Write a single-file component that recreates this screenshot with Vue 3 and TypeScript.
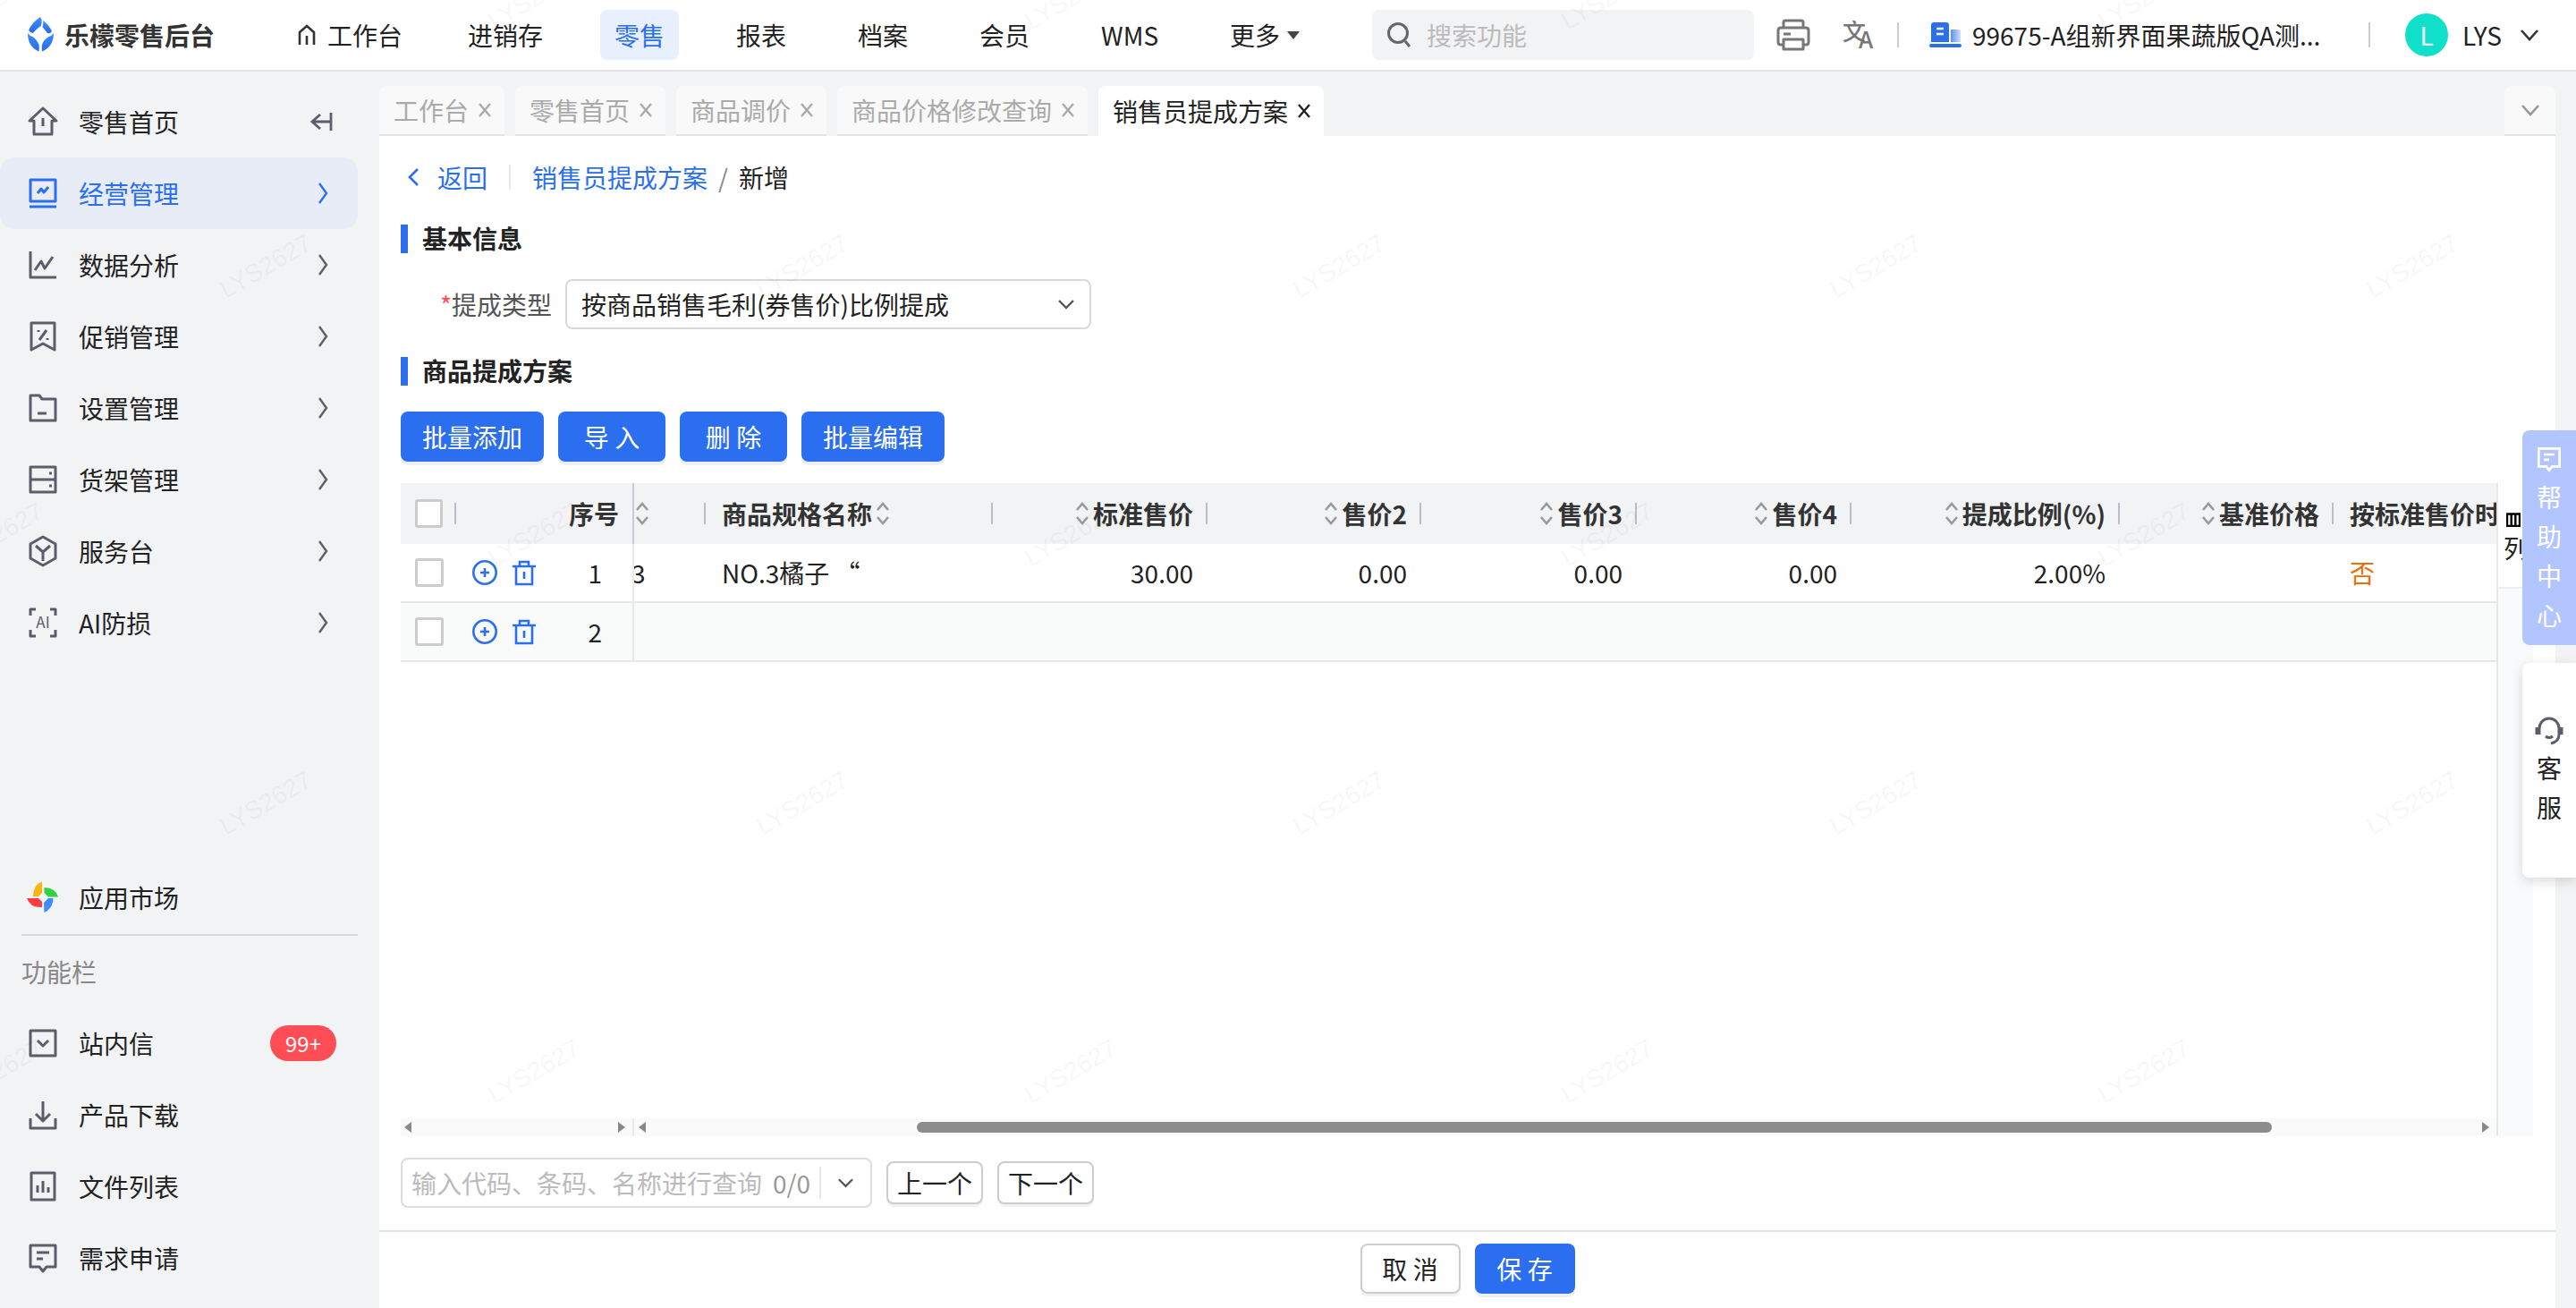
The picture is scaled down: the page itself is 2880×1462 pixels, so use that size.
<script setup lang="ts">
import { computed } from "vue";

interface SideItem {
    label: string;
    icon: string;
    arrow?: boolean;
    active?: boolean;
    ai?: boolean;
}

const icons = {
    home: "M18 3L33 17H28V32H8V17H3ZM18 14V23",
    monitor: "M4 3H32V27H4ZM3 33H33M12 18L16 13L19 17L24 11",
    data: "M4 3V32H33M9 24L16 14L20 22L29 9",
    promo: "M5 3H31V33L18 26L5 33ZM22 11L14 22M13 11V13M23 20V22",
    folder: "M4 4H14L17 8H32V32H4ZM12 24H22",
    shelf: "M4 4H32V32H4ZM4 18H32M25 11H28M25 25H28",
    hex: "M18 2L32 10V26L18 34L4 26V10ZM10 12L18 19L26 12M18 19V29",
    corners: "M10 3H4V10M26 3H32V10M4 26V33H10M32 26V33H26",
    mail: "M4 4H32V32H4ZM12 15L18 21L24 15",
    download: "M18 3V24M10 17L18 25L26 17M4 22V33H32V22",
    files: "M5 3H31V33H5ZM12 25V17M18 25V12M24 25V19",
    request: "M4 4H32V28H22L18 33L14 28H4ZM11 12H25M11 19H18",
};

const mainMenu: SideItem[] = [
    { label: "经营管理", icon: icons.monitor, arrow: true, active: true },
    { label: "数据分析", icon: icons.data, arrow: true },
    { label: "促销管理", icon: icons.promo, arrow: true },
    { label: "设置管理", icon: icons.folder, arrow: true },
    { label: "货架管理", icon: icons.shelf, arrow: true },
    { label: "服务台", icon: icons.hex, arrow: true },
    { label: "AI防损", icon: icons.corners, arrow: true, ai: true },
];

const toolMenu: SideItem[] = [
    { label: "产品下载", icon: icons.download },
    { label: "文件列表", icon: icons.files },
    { label: "需求申请", icon: icons.request },
];

const navItems = ["进销存", "零售", "报表", "档案", "会员", "WMS"];
const tabs = ["工作台", "零售首页", "商品调价", "商品价格修改查询"];

interface Column {
    title: string;
    width: number;
    align: "left" | "right";
    sort: boolean;
    value?: string;
}

const columns: Column[] = [
    { title: "", width: 80, align: "left", sort: true, value: "3" },
    { title: "商品规格名称", width: 321, align: "left", sort: true, value: "NO.3橘子 “" },
    { title: "标准售价", width: 240, align: "right", sort: true, value: "30.00" },
    { title: "售价2", width: 239, align: "right", sort: true, value: "0.00" },
    { title: "售价3", width: 241, align: "right", sort: true, value: "0.00" },
    { title: "售价4", width: 240, align: "right", sort: true, value: "0.00" },
    { title: "提成比例(%)", width: 300, align: "right", sort: true, value: "2.00%" },
    { title: "基准价格", width: 239, align: "right", sort: true, value: "" },
    { title: "按标准售价时", width: 182, align: "left", sort: false, value: "否" },
];

const watermarks = computed(() => {
    const marks: { left: number; top: number }[] = [];
    for (let row = 0; row < 6; row++) {
        const top = row * 300 - 2;
        const start = row % 2 === 0 ? -3 : 297;
        for (let col = 0; col < 6; col++) {
            marks.push({ left: start + col * 600, top });
        }
    }
    return marks;
});
</script>

<template>
    <div class="app">
        <header class="topbar">
            <div class="logo">
                <svg width="29" height="40" viewBox="0 0 29 40">
                    <defs>
                        <linearGradient id="logoBlue" x1="0" y1="0" x2="0" y2="1">
                            <stop offset="0" stop-color="#3f8ff7" />
                            <stop offset="1" stop-color="#2468ee" />
                        </linearGradient>
                    </defs>
                    <g fill="url(#logoBlue)">
                        <path d="M1 15Q4 7 14 0Q17 5 14.500 10Q10 13 6 18Q3 18 1 15Z" />
                        <path d="M17 4Q24 9 27 16Q25 19 22 18Q19 14 16.500 11Q18 7 17 4Z" />
                        <path d="M0 18Q2 21 5.500 22Q10 25 12.500 31Q13 35 12.500 38.500Q0 33 0 18Z" />
                        <path d="M29 18Q27 21 23.500 22Q18 25 16 31Q15.500 35 16 38.500Q29 33 29 18Z" />
                    </g>
                </svg>
                <span>乐檬零售后台</span>
            </div>
            <nav class="nav">
                <a class="nav-item home">
                    <svg width="22" height="26" viewBox="0 0 22 26" fill="none" stroke="#333" stroke-width="2.600">
                        <path d="M3 24V10L11 3L19 10V24M11 14V24" />
                    </svg>
                    工作台
                </a>
                <a v-for="item in navItems" :key="item" class="nav-item" :class="{ current: item === '零售' }">{{ item }}</a>
                <a class="nav-item">更多<i class="caret"></i></a>
            </nav>
            <div class="search">
                <svg width="28" height="30" viewBox="0 0 28 30" fill="none" stroke="#666" stroke-width="3">
                    <circle cx="13" cy="13" r="10.500" />
                    <path d="M21 22L26 28" />
                </svg>
                <span>搜索功能</span>
            </div>
            <svg class="printer" width="38" height="36" viewBox="0 0 38 36" fill="none" stroke="#777" stroke-width="3" stroke-linejoin="round">
                <path d="M8 10V4Q8 2 10 2H28Q30 2 30 4V10M8 29H5Q2 29 2 26V13Q2 10 5 10H33Q36 10 36 13V26Q36 29 33 29H30M8 23H30V34H8ZM8 17H16" />
            </svg>
            <svg class="translate" width="38" height="32" viewBox="0 0 38 32">
                <text x="0" y="22" font-size="26" font-weight="500" fill="#777">文</text>
                <text x="18" y="31" font-size="26" font-weight="500" fill="#777">A</text>
            </svg>
            <i class="top-divider first"></i>
            <svg class="building" width="36" height="28" viewBox="0 0 36 28">
                <defs>
                    <linearGradient id="buildingSide" x1="0" y1="0" x2="1" y2="0">
                        <stop offset="0" stop-color="#5b8ff5" />
                        <stop offset="1" stop-color="#cfdffb" />
                    </linearGradient>
                </defs>
                <path d="M2 3Q2 0 5 0H19Q22 0 22 3V22H2Z" fill="#2b6ff0" />
                <path d="M24 8H33Q35 8 35 10V22H24Z" fill="url(#buildingSide)" />
                <rect x="0" y="24" width="36" height="4" rx="2" fill="#2b6ff0" />
                <path d="M8 7H16M8 13H16" stroke="#fff" stroke-width="2.500" />
            </svg>
            <span class="org">99675-A组新界面果蔬版QA测...</span>
            <i class="top-divider second"></i>
            <span class="avatar">L</span>
            <span class="user">LYS</span>
            <svg class="user-arrow" width="22" height="14" viewBox="0 0 22 14" fill="none" stroke="#333" stroke-width="2.600">
                <path d="M2 2L11 12L20 2" />
            </svg>
        </header>

        <div class="body">
            <aside class="sidebar">
                <div class="side-row">
                    <svg class="side-icon" width="36" height="36" viewBox="0 0 36 36"><path :d="icons.home" /></svg>
                    <span>零售首页</span>
                    <svg class="collapse" width="26" height="24" viewBox="0 0 26 24" fill="none" stroke="#5c5d6b" stroke-width="2.800">
                        <path d="M24 2V22M12 4L3 12L12 20M3 12H24" />
                    </svg>
                </div>
                <div v-for="item in mainMenu" :key="item.label" class="side-row" :class="{ active: item.active }">
                    <svg class="side-icon" width="36" height="36" viewBox="0 0 36 36">
                        <path :d="item.icon" />
                        <text v-if="item.ai" x="18" y="24" class="ai-text" text-anchor="middle">AI</text>
                    </svg>
                    <span>{{ item.label }}</span>
                    <svg class="side-arrow" width="14" height="28" viewBox="0 0 14 28" fill="none" stroke-width="2.400">
                        <path d="M3 3L11 14L3 25" />
                    </svg>
                </div>
                <div class="side-bottom">
                    <div class="side-row">
                        <svg width="36" height="36" viewBox="0 0 36 36">
                            <path d="M7 17Q7 4 17 0.500V13L13 17Z" fill="#fbb40f" />
                            <path d="M19.500 7Q32 7 35 17.500H24L19.500 13Z" fill="#2fd23f" />
                            <path d="M0 19H13L17 23V29Q4 30 0 19Z" fill="#ff3d3d" />
                            <path d="M19 24L24 19H29.500Q29.500 30 19.500 35Z" fill="#3b8dff" />
                        </svg>
                        <span>应用市场</span>
                    </div>
                    <div class="side-line"></div>
                    <div class="side-title">功能栏</div>
                    <div class="side-row">
                        <svg class="side-icon" width="36" height="36" viewBox="0 0 36 36"><path :d="icons.mail" /></svg>
                        <span>站内信</span>
                        <b class="badge">99+</b>
                    </div>
                    <div v-for="item in toolMenu" :key="item.label" class="side-row">
                        <svg class="side-icon" width="36" height="36" viewBox="0 0 36 36"><path :d="item.icon" /></svg>
                        <span>{{ item.label }}</span>
                    </div>
                </div>
            </aside>

            <main class="main">
                <div class="tabs">
                    <div v-for="tab in tabs" :key="tab" class="tab">
                        {{ tab }}
                        <svg class="tab-x" width="16" height="16" viewBox="0 0 16 16"><path d="M2 1L14 15M14 1L2 15" /></svg>
                    </div>
                    <div class="tab on">
                        销售员提成方案
                        <svg class="tab-x" width="16" height="16" viewBox="0 0 16 16"><path d="M2 1L14 15M14 1L2 15" /></svg>
                    </div>
                    <div class="tab-more">
                        <svg width="22" height="14" viewBox="0 0 22 14" fill="none" stroke="#999" stroke-width="2.600">
                            <path d="M2 2L11 12L20 2" />
                        </svg>
                    </div>
                </div>

                <section class="page">
                    <div class="crumbs">
                        <svg width="14" height="22" viewBox="0 0 14 22" fill="none" stroke="#2b6ff0" stroke-width="2.600">
                            <path d="M12 2L3 11L12 20" />
                        </svg>
                        <a class="back">返回</a>
                        <i class="crumb-line"></i>
                        <a>销售员提成方案</a>
                        <span class="slash">/</span>
                        <span class="crumb-now">新增</span>
                    </div>

                    <h3 class="section">基本信息</h3>
                    <div class="form-row">
                        <label><i>*</i>提成类型</label>
                        <div class="select">
                            <span>按商品销售毛利(券售价)比例提成</span>
                            <svg width="20" height="12" viewBox="0 0 20 12" fill="none" stroke="#555" stroke-width="2.400">
                                <path d="M2 2L10 10L18 2" />
                            </svg>
                        </div>
                    </div>

                    <h3 class="section">商品提成方案</h3>
                    <div class="toolbar">
                        <button class="btn wide">批量添加</button>
                        <button class="btn">导 入</button>
                        <button class="btn">删 除</button>
                        <button class="btn wide">批量编辑</button>
                    </div>

                    <div class="table-wrap">
                        <div class="table">
                            <div class="grid-area">
                                <div class="tr head">
                                    <div class="fixed">
                                        <div class="check-cell"><i class="check"></i><i class="head-line"></i></div>
                                        <div class="seq-head">序号</div>
                                    </div>
                                    <div
                                        v-for="col in columns"
                                        :key="col.title"
                                        class="th"
                                        :class="[col.align, { 'sort-only': !col.title }]"
                                        :style="{ width: col.width + 'px' }"
                                    >
                                        <svg v-if="col.sort" class="sort" width="16" height="30" viewBox="0 0 16 30" fill="none" stroke="#999" stroke-width="2.600">
                                            <path d="M2 11L8 4L14 11M2 19L8 26L14 19" />
                                        </svg>
                                        <span v-if="col.title">{{ col.title }}</span>
                                        <i v-if="col.sort" class="th-line"></i>
                                    </div>
                                </div>
                                <div v-for="n in 2" :key="n" class="tr body-row" :class="{ even: n === 2 }">
                                    <div class="fixed">
                                        <div class="check-cell"><i class="check"></i></div>
                                        <svg class="op" width="30" height="30" viewBox="0 0 30 30" fill="none" stroke="#2b6ff0" stroke-width="2.600">
                                            <circle cx="15" cy="15" r="12.700" />
                                            <path d="M15 10V20M10 15H20" />
                                        </svg>
                                        <svg class="op trash" width="28" height="30" viewBox="0 0 28 30" fill="none" stroke="#2b6ff0" stroke-width="2.600">
                                            <path d="M1 8H27M5 8V28H23V8M9 8V3H19V8M14 14V22" />
                                        </svg>
                                        <span class="seq">{{ n }}</span>
                                    </div>
                                    <template v-if="n === 1">
                                        <div
                                            v-for="col in columns"
                                            :key="col.title"
                                            class="td"
                                            :class="[col.align, { no: col.value === '否', clip: col.title === '' }]"
                                            :style="{ width: col.width + 'px' }"
                                        >
                                            {{ col.value }}
                                        </div>
                                    </template>
                                </div>
                            </div>
                            <div class="scroll-row">
                                <div class="scroll-left">
                                    <i class="tri l"></i>
                                    <i class="tri r"></i>
                                </div>
                                <div class="scroll-right">
                                    <i class="tri l"></i>
                                    <div class="track"><div class="thumb"></div></div>
                                    <i class="tri r"></i>
                                </div>
                            </div>
                        </div>
                        <div class="col-side">
                            <div class="col-top">
                                <svg width="16" height="16" viewBox="0 0 16 16" fill="none" stroke="#000" stroke-width="2.400">
                                    <path d="M1 1.500H15V15H1ZM5.700 2V15M10.300 2V15" />
                                </svg>
                                <span>列</span>
                            </div>
                        </div>
                    </div>

                    <div class="finder-row">
                        <div class="finder">
                            <span class="ph">输入代码、条码、名称进行查询</span>
                            <span class="count">0/0</span>
                            <i class="finder-line"></i>
                            <svg width="20" height="12" viewBox="0 0 20 12" fill="none" stroke="#555" stroke-width="2.400">
                                <path d="M2 2L10 10L18 2" />
                            </svg>
                        </div>
                        <button class="ghost small">上一个</button>
                        <button class="ghost small">下一个</button>
                    </div>

                    <footer class="footer">
                        <button class="ghost">取 消</button>
                        <button class="btn save">保 存</button>
                    </footer>
                </section>
            </main>
        </div>

        <div class="help">
            <svg width="30" height="30" viewBox="0 0 36 36" fill="none" stroke="#fff" stroke-width="3.200">
                <path :d="icons.request" />
            </svg>
            <span>帮</span><span>助</span><span>中</span><span>心</span>
        </div>
        <div class="service">
            <svg width="34" height="34" viewBox="0 0 34 34" fill="none" stroke="#5c5d6b" stroke-width="3">
                <path d="M6 22V15A11 11 0 0 1 28 15V22Q28 30 19 32M3 14V22M31 14V22M13 24Q17 27 21 24" />
            </svg>
            <span>客</span><span>服</span>
        </div>

        <div class="watermarks">
            <span
                v-for="(mark, i) in watermarks"
                :key="i"
                class="mark"
                :style="{ left: mark.left + 'px', top: mark.top + 'px' }"
            >LYS2627</span>
        </div>
    </div>
</template>

<style>
html,
body {
    margin: 0;
    background: #fff;
}
</style>

<style scoped>
.app {
    position: relative;
    width: 2880px;
    height: 1462px;
    overflow: hidden;
    display: flex;
    flex-direction: column;
    font-family: "Noto Sans CJK SC", "Noto Sans", sans-serif;
    font-size: 28px;
    line-height: 40px;
    color: #222;
    background: #fff;
}

/* top bar */
.topbar {
    height: 78px;
    flex: none;
    display: flex;
    align-items: center;
    border-bottom: 2px solid #e2e2e2;
    background: #fff;
}
.logo {
    display: flex;
    align-items: center;
    width: 300px;
    padding-left: 31px;
    box-sizing: border-box;
    flex: none;
    gap: 12px;
    font-weight: 700;
    color: #333;
}
.nav {
    display: flex;
    align-items: center;
    gap: 48px;
    width: 1218px;
    margin-left: 16px;
    flex: none;
}
.nav-item {
    height: 56px;
    padding: 0 16px;
    display: flex;
    align-items: center;
    gap: 14px;
    border-radius: 8px;
}
.nav-item.home {
    gap: 12px;
    margin-right: -7px;
}
.nav-item.current {
    background: #e8effd;
    color: #2b6ff0;
}
.caret {
    margin-left: -6px;
    border: 7px solid transparent;
    border-top: 9px solid #444;
    border-bottom: 0;
}
.search {
    width: 427px;
    height: 56px;
    flex: none;
    display: flex;
    align-items: center;
    gap: 17px;
    padding-left: 16px;
    box-sizing: border-box;
    background: #f2f3f5;
    border-radius: 8px;
    color: #bbb;
}
.printer {
    margin-left: 25px;
    flex: none;
}
.translate {
    margin-left: 36px;
    flex: none;
}
.top-divider {
    width: 2px;
    height: 28px;
    flex: none;
    background: #ccc;
}
.top-divider.first {
    margin-left: 23px;
}
.building {
    margin-left: 34px;
    flex: none;
}
.org {
    margin-left: 12px;
    width: 443px;
    flex: none;
    white-space: nowrap;
}
.avatar {
    width: 48px;
    height: 48px;
    margin-left: 39px;
    flex: none;
    border-radius: 50%;
    background: #10dfc9;
    color: #fff;
    text-align: center;
    line-height: 48px;
}
.user {
    margin-left: 16px;
}
.user-arrow {
    margin-left: 20px;
}

/* left menu */
.body {
    flex: 1;
    display: flex;
    min-height: 0;
}
.sidebar {
    width: 424px;
    flex: none;
    display: flex;
    flex-direction: column;
    padding-top: 16px;
    box-sizing: border-box;
    background: #f2f3f5;
}
.side-row {
    position: relative;
    width: 400px;
    height: 80px;
    flex: none;
    display: flex;
    align-items: center;
    gap: 22px;
    padding-left: 30px;
    box-sizing: border-box;
    border-radius: 16px;
}
.side-row.active {
    background: #e8ecf7;
    color: #2b6ff0;
}
.side-icon {
    flex: none;
    fill: none;
    stroke: #5c5d6b;
    stroke-width: 3;
    stroke-linejoin: round;
}
.active .side-icon {
    stroke: #2b6ff0;
}
.ai-text {
    font-size: 17px;
    fill: #5c5d6b;
    stroke: none;
}
.collapse {
    position: absolute;
    left: 346px;
    top: 28px;
}
.side-arrow {
    position: absolute;
    left: 354px;
    top: 26px;
    stroke: #5c5d6b;
}
.active .side-arrow {
    stroke: #2b6ff0;
}
.side-bottom {
    margin-top: auto;
    padding-bottom: 16px;
}
.side-line {
    height: 2px;
    width: 376px;
    margin: 1px 0 0 24px;
    background: #d8d8dc;
}
.side-title {
    height: 80px;
    line-height: 80px;
    padding-left: 24px;
    color: #888;
}
.badge {
    position: absolute;
    left: 302px;
    top: 20px;
    width: 74px;
    height: 40px;
    border-radius: 20px;
    background: #ff4d55;
    color: #fff;
    font-size: 24px;
    font-weight: 400;
    line-height: 40px;
    text-align: center;
}

/* tabs */
.main {
    flex: 1;
    min-width: 0;
    display: flex;
    flex-direction: column;
    padding-right: 23px;
    background: #f2f3f5;
}
.tabs {
    height: 56px;
    margin-top: 16px;
    flex: none;
    display: flex;
    gap: 12px;
}
.tab {
    height: 54px;
    padding: 0 14px 0 16px;
    display: flex;
    align-items: center;
    gap: 10px;
    background: #f9f9f9;
    border-bottom: 2px solid #e2e2e2;
    border-radius: 8px 8px 0 0;
    color: #aaa;
    white-space: nowrap;
}
.tab-x {
    flex: none;
    fill: none;
    stroke: #aaa;
    stroke-width: 2.400;
}
.tab.on {
    height: 56px;
    border-bottom: 0;
    background: #fff;
    color: #222;
}
.tab.on .tab-x {
    stroke: #222;
}
.tab-more {
    margin-left: auto;
    width: 57px;
    height: 54px;
    display: flex;
    align-items: center;
    justify-content: center;
    background: #f9f9f9;
    border-bottom: 2px solid #e2e2e2;
    border-radius: 8px 8px 0 0;
}

/* page */
.page {
    flex: 1;
    min-height: 0;
    display: flex;
    flex-direction: column;
    background: #fff;
    padding-left: 24px;
}
.crumbs {
    height: 44px;
    margin-top: 24px;
    flex: none;
    display: flex;
    align-items: center;
    color: #2b6ff0;
}
.crumbs svg {
    margin-left: 7px;
}
.back {
    margin-left: 20px;
}
.crumb-line {
    width: 2px;
    height: 28px;
    margin: 0 24px;
    background: #e6e6e6;
}
.slash {
    margin: 0 12px;
    color: #888;
}
.crumb-now {
    color: #222;
}
.section {
    height: 32px;
    margin: 31px 0 0;
    flex: none;
    display: flex;
    align-items: center;
    box-sizing: border-box;
    padding: 0 0 3px 16px;
    border-left: 8px solid #2b6ff0;
    font-size: 28px;
    font-weight: 700;
    color: #222;
}
.form-row {
    margin-top: 29px;
    height: 56px;
    flex: none;
    display: flex;
    align-items: center;
}
.form-row label {
    width: 184px;
    padding-right: 15px;
    box-sizing: border-box;
    text-align: right;
    color: #555;
}
.form-row label i {
    font-style: normal;
    color: #ff4d55;
}
.select {
    width: 588px;
    height: 56px;
    display: flex;
    align-items: center;
    justify-content: space-between;
    padding: 0 16px;
    box-sizing: border-box;
    border: 2px solid #d9d9d9;
    border-radius: 8px;
}
.toolbar {
    margin-top: 29px;
    flex: none;
    display: flex;
    gap: 16px;
}
.btn {
    width: 120px;
    height: 56px;
    padding: 0;
    border: 0;
    border-radius: 8px;
    background: #2b6ff0;
    box-shadow: 0 4px 0 #f0f0f0;
    color: #fff;
    font: inherit;
}
.btn.wide {
    width: 160px;
}

/* table */
.table-wrap {
    margin-top: 24px;
    flex: 1;
    min-height: 0;
    display: flex;
}
.table {
    width: 2345px;
    flex: none;
    box-sizing: border-box;
    display: flex;
    flex-direction: column;
    border-right: 2px solid #e8e8e8;
}
.grid-area {
    flex: 1;
    overflow: hidden;
}
.tr {
    display: flex;
}
.tr.head {
    height: 68px;
    background: #f2f3f5;
    font-weight: 600;
    color: #333;
}
.body-row {
    height: 64px;
    border-bottom: 2px solid #e8e8e8;
}
.body-row.even {
    background: #f9fafa;
}
.fixed {
    position: relative;
    width: 261px;
    flex: none;
    box-sizing: border-box;
    display: flex;
    align-items: center;
    border-right: 2px solid #e8e8e8;
}
.head .fixed {
    border-right-color: #c8ccd6;
}
.check-cell {
    width: 62px;
    flex: none;
    display: flex;
    align-items: center;
    padding-left: 16px;
    box-sizing: border-box;
}
.check {
    width: 32px;
    height: 32px;
    box-sizing: border-box;
    border: 3px solid #ccc;
    border-radius: 3px;
    background: #fff;
}
.head-line {
    width: 2px;
    height: 24px;
    margin-left: 13px;
    background: #b8bcc6;
}
.seq-head {
    margin-left: auto;
    padding-right: 15px;
}
.op {
    flex: none;
    margin-left: 17px;
}
.op.trash {
    margin-left: 15px;
}
.seq {
    margin-left: auto;
    padding-right: 34px;
}
.th,
.td {
    position: relative;
    flex: none;
    box-sizing: border-box;
    display: flex;
    align-items: center;
    white-space: nowrap;
    overflow: hidden;
}
.th {
    gap: 4px;
}
.th.right,
.td.right {
    justify-content: flex-end;
    padding-right: 16px;
}
.th.left,
.td.left {
    padding-left: 18px;
}
.th.left .sort {
    order: 1;
}
.th.sort-only {
    padding-left: 1px;
}
.th-line {
    position: absolute;
    right: 0;
    top: 22px;
    width: 2px;
    height: 24px;
    background: #b8bcc6;
}
.td.clip {
    padding-left: 0;
    text-indent: -3px;
}
.td.no {
    color: #e8710a;
}
.sort {
    flex: none;
}
.scroll-row {
    height: 20px;
    flex: none;
    display: flex;
    background: #fafafa;
}
.scroll-left {
    width: 261px;
    flex: none;
    box-sizing: border-box;
    display: flex;
    align-items: center;
    justify-content: space-between;
    padding: 0 8px 0 4px;
    border-right: 2px solid #e8e8e8;
}
.scroll-right {
    flex: 1;
    display: flex;
    align-items: center;
    padding: 0 8px 0 5px;
}
.track {
    flex: 1;
    padding-left: 303px;
    padding-right: 235px;
}
.thumb {
    height: 12px;
    border-radius: 6px;
    background: #8c8c8c;
}
.tri {
    border: 6px solid transparent;
    border-left-width: 0;
    border-right-width: 0;
}
.tri.l {
    border-right: 8px solid #888;
}
.tri.r {
    border-left: 8px solid #888;
}
.col-side {
    flex: 1;
    display: flex;
    flex-direction: column;
    background: #f9fafb;
    margin-right: 25px;
}
.col-top {
    height: 118px;
    flex: none;
    display: flex;
    flex-direction: column;
    padding: 33px 0 0 9px;
    box-sizing: border-box;
    background: #fff;
    border-bottom: 2px solid #eee;
    color: #222;
    overflow: hidden;
}
.col-top span {
    margin-top: 3px;
    margin-left: -3px;
}

/* find bar and footer */
.finder-row {
    margin-top: 24px;
    height: 56px;
    flex: none;
    display: flex;
    align-items: center;
    gap: 16px;
}
.finder {
    width: 527px;
    height: 56px;
    display: flex;
    align-items: center;
    padding: 0 18px 0 10px;
    box-sizing: border-box;
    border: 2px solid #ddd;
    border-radius: 8px;
    white-space: nowrap;
}
.ph {
    color: #bbb;
}
.count {
    margin-left: 12px;
    color: #999;
}
.finder-line {
    width: 2px;
    height: 36px;
    margin: 0 18px 0 10px;
    background: #e6e6e6;
}
.ghost {
    width: 112px;
    height: 56px;
    padding: 0;
    border: 2px solid #ccc;
    border-radius: 8px;
    background: #fff;
    box-shadow: 0 3px 0 #f2f2f2;
    color: #222;
    font: inherit;
}
.ghost.small {
    width: 108px;
    height: 48px;
    line-height: 40px;
}
.footer {
    margin: 25px 0 0 -24px;
    height: 87px;
    flex: none;
    box-sizing: border-box;
    display: flex;
    justify-content: center;
    gap: 16px;
    padding-top: 13px;
    border-top: 2px solid #e2e2e2;
}
.btn.save {
    width: 112px;
}

/* floating side panels */
.help,
.service {
    position: absolute;
    left: 2820px;
    width: 60px;
    height: 240px;
    display: flex;
    flex-direction: column;
    align-items: center;
    justify-content: flex-start;
    box-sizing: border-box;
    border-radius: 8px 0 0 8px;
    line-height: 44px;
}
.help {
    top: 481px;
    padding-top: 17px;
    background: #b3c5ff;
    color: #fff;
}
.help svg {
    margin-bottom: 5px;
}
.service {
    top: 741px;
    padding-top: 58px;
    background: #fff;
    box-shadow: 0 4px 14px rgba(0, 0, 0, 0.14);
}
.service svg {
    margin-bottom: 3px;
}

/* watermark */
.watermarks {
    position: absolute;
    inset: 0;
    pointer-events: none;
}
.mark {
    position: absolute;
    font-family: "Liberation Sans", sans-serif;
    font-size: 28px;
    line-height: 32px;
    color: rgba(0, 0, 0, 0.05);
    transform: translate(-50%, -50%) rotate(-30deg);
}
</style>
